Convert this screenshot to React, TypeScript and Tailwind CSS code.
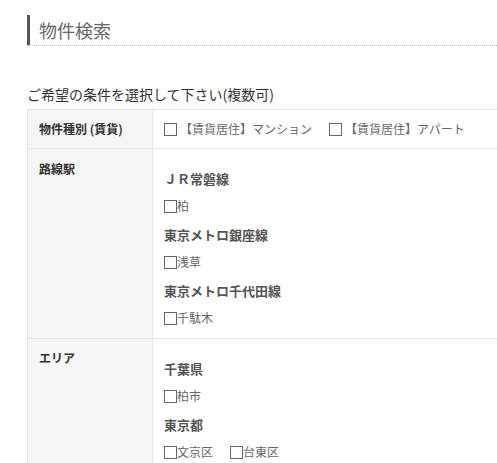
const font = { fontFamily: '"Noto Sans CJK JP", "Noto Sans", sans-serif' };

function Box() {
  return <span className="inline-block h-[13px] w-[13px] shrink-0 border border-[#666] bg-white" />;
}

function Check({ label, gap = false }: { label: string; gap?: boolean }) {
  return (
    <span className="mr-[17px] inline-flex h-[18px] items-center">
      <Box />
      <span className={gap ? "ml-[3px]" : ""}>{label}</span>
    </span>
  );
}

const lines = [
  { name: "ＪＲ常磐線", items: ["柏"] },
  { name: "東京メトロ銀座線", items: ["浅草"] },
  { name: "東京メトロ千代田線", items: ["千駄木"] },
];

const areas = [
  { name: "千葉県", items: ["柏市"] },
  { name: "東京都", items: ["文京区", "台東区"] },
];

function Groups({ groups }: { groups: { name: string; items: string[] }[] }) {
  return (
    <div className="flex flex-col pt-[21px] pb-[11px]">
      {groups.map((g, i) => (
        <div key={g.name} className={i > 0 ? "mt-[11px]" : ""}>
          <div className="h-[18px] text-[13px] leading-[18px] font-bold text-[#555]">{g.name}</div>
          <div className="mt-[9px] flex text-[12px] text-[#666]">
            {g.items.map((it) => (
              <Check key={it} label={it} />
            ))}
          </div>
        </div>
      ))}
    </div>
  );
}

export default function App() {
  return (
    <div className="h-[463px] w-[497px] overflow-hidden bg-white pt-[15px] pl-[27px]" style={font}>
      <h2 className="flex h-[31px] items-center border-b border-dotted border-b-[#bbb] text-[18px] font-normal text-[#666]">
        <span className="h-full w-[3px] bg-[#555]" />
        <span className="ml-[9px]">物件検索</span>
      </h2>

      <p className="mt-[39px] h-[18px] text-[14px] leading-[18px] text-[#333]">ご希望の条件を選択して下さい(複数可)</p>

      <div className="mt-[6px] w-[520px] border-t border-l border-[#e5e5e5] text-[12px]">
        <div className="flex border-b border-[#e5e5e5]">
          <div className="flex w-[125px] shrink-0 items-center border-r border-[#e5e5e5] bg-[#f5f5f5] py-[10px] pl-[11px] font-bold leading-[18px] text-[#333]">
            物件種別 (賃貨)
          </div>
          <div className="flex items-center py-[10px] pl-[11px] leading-[18px] text-[#666]">
            <Check label="【賃貨居住】マンション" gap />
            <Check label="【賃貨居住】アパート" gap />
          </div>
        </div>

        <div className="flex border-b border-[#e5e5e5]">
          <div className="w-[125px] shrink-0 border-r border-[#e5e5e5] bg-[#f5f5f5] pt-[11px] pl-[11px] font-bold leading-[18px] text-[#333]">
            路線駅
          </div>
          <div className="pl-[11px]">
            <Groups groups={lines} />
          </div>
        </div>

        <div className="flex border-b border-[#e5e5e5]">
          <div className="w-[125px] shrink-0 border-r border-[#e5e5e5] bg-[#f5f5f5] pt-[10px] pl-[11px] font-bold leading-[18px] text-[#333]">
            エリア
          </div>
          <div className="pl-[11px]">
            <Groups groups={areas} />
          </div>
        </div>
      </div>
    </div>
  );
}
